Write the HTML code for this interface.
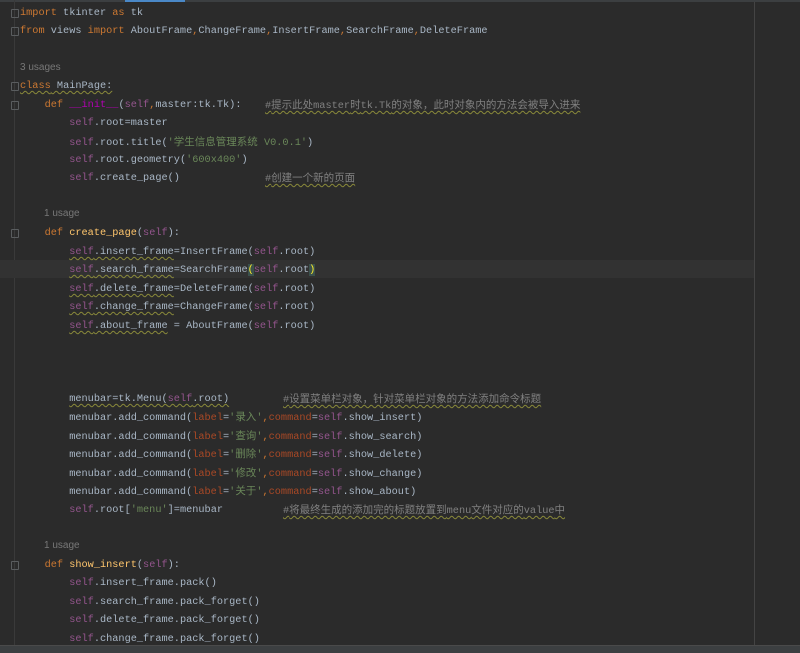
<!DOCTYPE html>
<html><head><meta charset="utf-8"><style>
body{margin:0;width:800px;height:652px;background:#2b2b2b;overflow:hidden;position:relative;font-family:"Liberation Mono","Noto Sans CJK SC",monospace;font-size:10.25px;color:#a9b7c6}
.l{position:absolute;left:20px;white-space:pre;height:18px;line-height:18px;margin-top:2px}
.k{color:#cc7832}.s{color:#94558d}.f{color:#ffc66d}.g{color:#6a8759}.m{color:#808080}.p{color:#aa4926}
.u{position:absolute;font-family:"Liberation Sans",sans-serif;font-size:10px;color:#787878;margin-top:2px}
.c{font-family:"Noto Sans CJK SC",sans-serif;font-size:10.5px}
.w{text-decoration:underline wavy #8a8a3a;text-decoration-thickness:1px;text-underline-offset:2px}
.fold{position:absolute;left:11px;width:6px;height:7px;border:1px solid #5a5d5f;border-radius:1px;margin-top:2px}
</style></head><body>
<div style="position:absolute;left:0;top:0;width:800px;height:2px;background:#3c3f41"></div>
<div style="position:absolute;left:125px;top:0;width:60px;height:2px;background:#4a88c7"></div>
<div style="position:absolute;left:14px;top:0;width:1px;height:645px;background:#3a3a3a"></div>
<div style="position:absolute;left:754px;top:2px;width:1px;height:643px;background:#444"></div>
<div style="position:absolute;left:0;top:260px;width:754px;height:18px;background:#323232"></div>
<div style="position:absolute;left:0;top:645px;width:800px;height:7px;background:#3c3f41;border-top:1px solid #4a4a4a"></div>
<div class="fold" style="top:7px"></div><div class="fold" style="top:25px"></div><div class="fold" style="top:80px"></div><div class="fold" style="top:99px"></div><div class="fold" style="top:227px"></div><div class="fold" style="top:559px"></div>

<div class="l" style="top:2px"><span class="k">import</span> tkinter <span class="k">as</span> tk</div>
<div class="l" style="top:20px"><span class="k">from</span> views <span class="k">import</span> AboutFrame<span class="k">,</span>ChangeFrame<span class="k">,</span>InsertFrame<span class="k">,</span>SearchFrame<span class="k">,</span>DeleteFrame</div>
<div class="u" style="left:20px;top:60px">3 usages</div>
<div class="l" style="top:75px"><span class="k w">class</span><span class="w"> MainPage:</span></div>
<div class="l" style="top:94px">    <span class="k">def</span> <span style="color:#b200b2">__init__</span>(<span class="s">self</span><span class="k">,</span>master:tk.Tk):</div>
<div class="l m w" style="left:265px;top:94px">#<span class="c">提示此处</span>master<span class="c">时</span>tk.Tk<span class="c">的对象，此时对象内的方法会被导入进来</span></div>
<div class="l" style="top:112px">        <span class="s">self</span>.root=master</div>
<div class="l" style="top:131px">        <span class="s">self</span>.root.title(<span class="g">'<span class="c">学生信息管理系统</span> V0.0.1'</span>)</div>
<div class="l" style="top:149px">        <span class="s">self</span>.root.geometry(<span class="g">'600x400'</span>)</div>
<div class="l" style="top:167px">        <span class="s">self</span>.create_page()</div>
<div class="l m w" style="left:265px;top:167px">#<span class="c">创建一个新的页面</span></div>
<div class="u" style="left:44px;top:206px">1 usage</div>
<div class="l" style="top:222px">    <span class="k">def</span> <span class="f">create_page</span>(<span class="s">self</span>):</div>
<div class="l" style="top:241px">        <span class="w"><span class="s">self</span>.insert_frame</span>=InsertFrame(<span class="s">self</span>.root)</div>
<div class="l" style="top:259px">        <span class="w"><span class="s">self</span>.search_frame</span>=SearchFrame<span style="color:#ffef28;background:#3b514d">(</span><span class="s">self</span>.root<span style="color:#ffef28;background:#3b514d">)</span></div>
<div class="l" style="top:278px">        <span class="w"><span class="s">self</span>.delete_frame</span>=DeleteFrame(<span class="s">self</span>.root)</div>
<div class="l" style="top:296px">        <span class="w"><span class="s">self</span>.change_frame</span>=ChangeFrame(<span class="s">self</span>.root)</div>
<div class="l" style="top:315px">        <span class="w"><span class="s">self</span>.about_frame</span> = AboutFrame(<span class="s">self</span>.root)</div>
<div class="l" style="top:388px">        <span class="w">menubar=tk.Menu(<span class="s">self</span>.root)</span></div>
<div class="l m w" style="left:283px;top:388px">#<span class="c">设置菜单栏对象，针对菜单栏对象的方法添加命令标题</span></div>
<div class="l" style="top:406px">        menubar.add_command(<span class="p">label</span>=<span class="g">'<span class="c">录入</span>'</span><span class="k">,</span><span class="p">command</span>=<span class="s">self</span>.show_insert)</div>
<div class="l" style="top:425px">        menubar.add_command(<span class="p">label</span>=<span class="g">'<span class="c">查询</span>'</span><span class="k">,</span><span class="p">command</span>=<span class="s">self</span>.show_search)</div>
<div class="l" style="top:443px">        menubar.add_command(<span class="p">label</span>=<span class="g">'<span class="c">删除</span>'</span><span class="k">,</span><span class="p">command</span>=<span class="s">self</span>.show_delete)</div>
<div class="l" style="top:462px">        menubar.add_command(<span class="p">label</span>=<span class="g">'<span class="c">修改</span>'</span><span class="k">,</span><span class="p">command</span>=<span class="s">self</span>.show_change)</div>
<div class="l" style="top:480px">        menubar.add_command(<span class="p">label</span>=<span class="g">'<span class="c">关于</span>'</span><span class="k">,</span><span class="p">command</span>=<span class="s">self</span>.show_about)</div>
<div class="l" style="top:499px">        <span class="s">self</span>.root[<span class="g">'menu'</span>]=menubar</div>
<div class="l m w" style="left:283px;top:499px">#<span class="c">将最终生成的添加完的标题放置到</span>menu<span class="c">文件对应的</span>value<span class="c">中</span></div>
<div class="u" style="left:44px;top:538px">1 usage</div>
<div class="l" style="top:554px">    <span class="k">def</span> <span class="f">show_insert</span>(<span class="s">self</span>):</div>
<div class="l" style="top:572px">        <span class="s">self</span>.insert_frame.pack()</div>
<div class="l" style="top:591px">        <span class="s">self</span>.search_frame.pack_forget()</div>
<div class="l" style="top:609px">        <span class="s">self</span>.delete_frame.pack_forget()</div>
<div class="l" style="top:628px">        <span class="s">self</span>.change_frame.pack_forget()</div>
</body></html>
